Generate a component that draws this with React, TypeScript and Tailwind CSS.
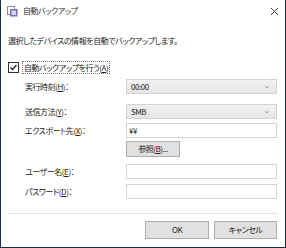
const font = "font-['Meiryo_UI','Noto_Sans_CJK_JP',sans-serif] [font-feature-settings:'palt'] tracking-[-0.45px]";

function Chevron() {
  return (
    <svg width="6" height="4" viewBox="0 0 6 4" className="shrink-0">
      <path d="M1 1 L3 3 L5 1" fill="none" stroke="#a0a0a0" strokeWidth="1" />
    </svg>
  );
}

function Select({ value }: { value: string }) {
  return (
    <div className="w-[151px] h-[15px] flex items-center justify-between pl-[4px] pr-[6px] border border-[#d2d2d2] bg-gradient-to-b from-[#f2f2f2] to-[#e6e6e6] text-[8px] text-[#222]">
      <span>{value}</span>
      <Chevron />
    </div>
  );
}

function Input({ value = '' }: { value?: string }) {
  return (
    <div className="w-[151px] h-[15px] flex items-center pl-[2px] border border-[#d4d4d4] bg-white text-[8px] text-[#222]">
      {value}
    </div>
  );
}

function Row({ label, accel, children, mt }: { label: string; accel: string; children: React.ReactNode; mt: string }) {
  return (
    <div className={`flex items-center ${mt}`}>
      <div className="w-[118px] pl-[17px] text-[8px] text-[#222] leading-none">
        {label}(<span className="underline">{accel}</span>)：
      </div>
      {children}
    </div>
  );
}

export default function App() {
  return (
    <div className={`w-[286px] h-[248px] bg-white border-x border-b border-[#1b2d43] flex flex-col ${font}`}>
      <div className="h-[22px] flex items-center pl-[6px] shrink-0">
        <svg width="11" height="11" viewBox="0 0 11 11">
          <rect x="0.5" y="0.5" width="7" height="8" fill="#ffffff" stroke="#8a86a8" />
          <rect x="3" y="3" width="7.5" height="7.5" fill="#7a6fb0" />
          <rect x="4.5" y="4.5" width="4.5" height="4.5" fill="#d8d4ec" />
        </svg>
        <span className="ml-[5px] text-[8px] text-[#333] leading-none">自動バックアップ</span>
        <svg width="9" height="9" viewBox="0 0 9 9" className="ml-auto mr-[6px]">
          <path d="M1 1 L8 8 M8 1 L1 8" stroke="#444" strokeWidth="1" />
        </svg>
      </div>

      <div className="px-[7px] flex flex-col">
        <div className="mt-[13px] text-[8px] text-[#222] leading-[12px]">
          選択したデバイスの情報を自動でバックアップします。
        </div>

        <div className="mt-[14px] flex items-center">
          <svg width="11" height="11" viewBox="0 0 11 11" className="shrink-0">
            <rect x="0.5" y="0.5" width="10" height="10" fill="#fff" stroke="#333" />
            <path d="M2.5 5.5 L4.5 7.5 L8.5 3" fill="none" stroke="#222" strokeWidth="1.3" />
          </svg>
          <div className="ml-[3px] px-[1px] h-[13px] flex items-center border border-dotted border-[#777] text-[8px] text-[#222] leading-none">
            自動バックアップを行う(<span className="underline">A</span>)
          </div>
        </div>

        <Row label="実行時刻" accel="H" mt="mt-[5px]">
          <Select value="00:00" />
        </Row>
        <Row label="送信方法" accel="Y" mt="mt-[10px]">
          <Select value="SMB" />
        </Row>
        <Row label="エクスポート先" accel="X" mt="mt-[4px]">
          <Input value="¥¥" />
        </Row>
        <div className="flex mt-[3px]">
          <div className="w-[118px]" />
          <div className="w-[54px] h-[16px] flex items-center justify-center border border-[#adadad] bg-[#e1e1e1] text-[8px] text-[#222]">
            参照(<span className="underline">B</span>)...
          </div>
        </div>
        <Row label="ユーザー名" accel="E" mt="mt-[7px]">
          <Input />
        </Row>
        <Row label="パスワード" accel="D" mt="mt-[5px]">
          <Input />
        </Row>

        <div className="mt-[14px] h-px bg-[#e3e3e3]" />

        <div className="mt-[7px] flex justify-end gap-[5px] pr-[1px]">
          <div className="w-[64px] h-[18px] flex items-center justify-center border border-[#adadad] bg-[#e1e1e1] text-[8px] text-[#222]">
            OK
          </div>
          <div className="w-[63px] h-[18px] flex items-center justify-center border border-[#adadad] bg-[#e1e1e1] text-[8px] text-[#222]">
            キャンセル
          </div>
        </div>
      </div>
    </div>
  );
}
